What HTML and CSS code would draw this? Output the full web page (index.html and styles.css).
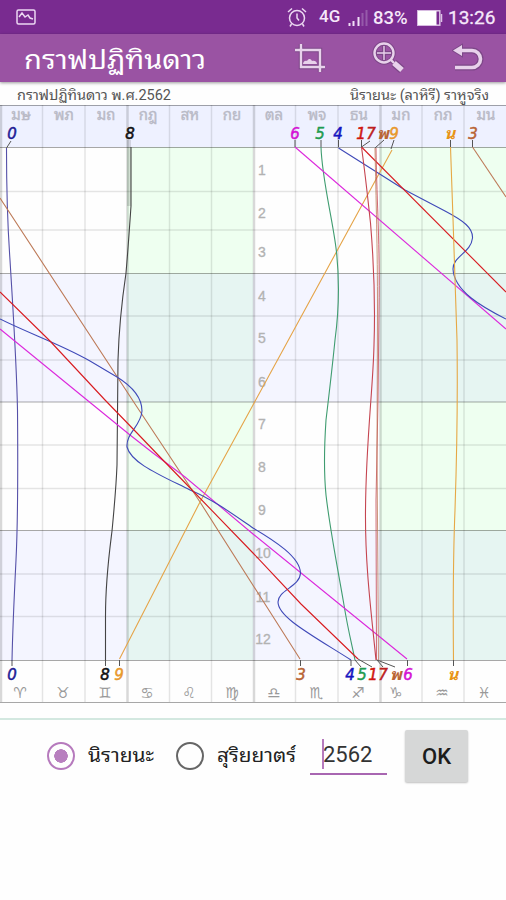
FILE: index.html
```
<!DOCTYPE html>
<html lang="th">
<head>
    <meta charset="UTF-8">
    <meta name="viewport" content="width=device-width, initial-scale=1.0">
    <title>กราฟปฏิทินดาว</title>
    <link rel="stylesheet" href="styles.css">
</head>
<body>
    <div class="status-bar">
        <svg class="picture-icon" width="20" height="16" viewBox="0 0 20 16">
            <rect x="1" y="1" width="18" height="14" rx="1.5"/>
            <path d="M3 8l3-4 3 4 3-2 2 3 3 1"/>
        </svg>
        <div class="status-right">
            <svg class="alarm-icon" width="20" height="21" viewBox="0 0 20 21">
                <circle cx="10" cy="11" r="7.5"/>
                <path d="M10 6.500V11l2 2.500M1 5l4-3.500M19 5l-4-3.500M4.500 17L3 19.500M15.500 17l1.500 2.500"/>
            </svg>
            <span class="network">4G</span>
            <svg class="signal-icon" width="20" height="18" viewBox="0 0 20 18">
                <path d="M1.500 14v3M5.500 12v5M10.500 8v9"/>
                <path class="dim" d="M14.500 4v13M18.500 1v16"/>
            </svg>
            <span class="percent">83%</span>
            <svg class="battery-icon" width="26" height="16" viewBox="0 0 26 16">
                <rect class="frame" x=".8" y=".8" width="22" height="14.400"/>
                <rect class="level" x="1" y="1" width="18.500" height="14"/>
                <path class="frame" d="M24.500 4v8"/>
            </svg>
            <span class="clock">13:26</span>
        </div>
    </div>
    <div class="toolbar">
        <h1><svg width="184" height="48"><text x="0" y="29" textLength="182" lengthAdjust="spacingAndGlyphs">กราฟปฏิทินดาว</text></svg></h1>
        <div class="actions">
            <svg width="32" height="32" viewBox="0 0 32 32">
                <g class="icon-edge"><path d="M1 8h25v22M7 2v23h24"/></g>
                <g class="icon-line"><path d="M1 8h25v22M7 2v23h24"/></g>
                <path class="icon-fill" d="M9 22c0-3 3-4 4-3 2-3 4-2 5 0 3-1 5 1 5 3z"/>
            </svg>
            <svg width="34" height="33" viewBox="0 0 34 33">
                <g class="icon-edge"><circle cx="12" cy="12" r="9.500"/><path d="M19 19l3 3"/><path class="handle" d="M22 22l8 7"/></g>
                <g class="icon-line"><circle cx="12" cy="12" r="9.500"/><path d="M19 19l3 3"/><path class="handle" d="M22 22l8 7"/></g>
                <path class="cross-edge" d="M12 5v14M5 12h14"/>
                <path class="cross" d="M12 5v14M5 12h14"/>
            </svg>
            <svg width="32" height="30" viewBox="0 0 32 30">
                <g class="icon-edge back"><path d="M8 7.500h12a8.500 8.500 0 0 1 0 17H3"/><path class="head" d="M1 7.500L10 2v11z"/></g>
                <g class="icon-line back"><path d="M8 7.500h12a8.500 8.500 0 0 1 0 17H3"/></g>
                <path class="icon-fill" d="M1 7.500L10 2v11z"/>
            </svg>
        </div>
    </div>

    <svg class="chart" width="506" height="622" viewBox="0 82 506 622">
        <!-- captions -->
        <g class="caption">
            <text x="17" y="100" textLength="154" lengthAdjust="spacingAndGlyphs">กราฟปฏิทินดาว พ.ศ.2562</text>
            <text x="350" y="100" textLength="139" lengthAdjust="spacingAndGlyphs">นิรายนะ (ลาหิรี) ราหูจริง</text>
        </g>

        <!-- backgrounds -->
        <rect class="bg-head" x="0" y="105" width="506" height="42"/>
        <rect class="bg-blue" x="0" y="274" width="506" height="128"/>
        <rect class="bg-blue" x="0" y="531" width="506" height="129"/>
        <g class="bg-green">
            <rect x="127" y="147" width="126" height="127"/>
            <rect x="380" y="147" width="126" height="127"/>
            <rect x="127" y="402" width="126" height="129"/>
            <rect x="380" y="402" width="126" height="129"/>
        </g>
        <g class="bg-teal">
            <rect x="127" y="274" width="126" height="128"/>
            <rect x="380" y="274" width="126" height="128"/>
            <rect x="127" y="531" width="126" height="129"/>
            <rect x="380" y="531" width="126" height="129"/>
        </g>

        <!-- grid -->
        <path class="grid" d="M42.500 105v597M85 105v597M169.500 105v597M211.500 105v597M295.500 105v597M338 105v597M422 105v597M464 105v597"/>
        <path class="grid" d="M0 191.500h506M0 230h506M0 316h506M0 360h506M0 445h506M0 488.500h506M0 574h506M0 616.500h506"/>
        <path class="grid-wide" d="M1 105v597M127.500 105v597M254 105v597M380.500 105v597"/>
        <path class="grid-quarter" d="M0 105.500h506M0 147.500h506M0 273.500h506M0 402h506M0 530.500h506M0 660.500h506M0 702.500h506"/>
        <rect class="shade" x="127" y="140" width="4" height="66"/>

        <g class="month">
            <text x="21" y="120">มษ</text>
            <text x="64" y="120">พภ</text>
            <text x="106" y="120">มถ</text>
            <text x="148" y="120">กฎ</text>
            <text x="190" y="120">สห</text>
            <text x="232" y="120">กย</text>
            <text x="274" y="120">ตล</text>
            <text x="317" y="120">พจ</text>
            <text x="359" y="120">ธน</text>
            <text x="401" y="120">มก</text>
            <text x="443" y="120">กภ</text>
            <text x="486" y="120">มน</text>
        </g>
        <g class="row-number">
            <text x="262" y="175">1</text>
            <text x="262" y="218">2</text>
            <text x="262" y="257">3</text>
            <text x="262" y="301">4</text>
            <text x="262" y="343">5</text>
            <text x="262" y="387">6</text>
            <text x="262" y="429">7</text>
            <text x="262" y="472">8</text>
            <text x="262" y="515">9</text>
            <text x="263" y="558">10</text>
            <text x="263" y="602">11</text>
            <text x="263" y="644">12</text>
        </g>
        <g class="zodiac">
            <text x="20" y="698">♈&#xFE0E;</text>
            <text x="63" y="698">♉&#xFE0E;</text>
            <text x="105" y="698">♊&#xFE0E;</text>
            <text x="147" y="698">♋&#xFE0E;</text>
            <text x="189" y="698">♌&#xFE0E;</text>
            <text x="232" y="698">♍&#xFE0E;</text>
            <text x="274" y="698">♎&#xFE0E;</text>
            <text x="316" y="698">♏&#xFE0E;</text>
            <text x="358" y="698">♐&#xFE0E;</text>
            <text x="396" y="698">♑&#xFE0E;</text>
            <text x="442" y="698">♒&#xFE0E;</text>
            <text x="484" y="698">♓&#xFE0E;</text>
        </g>

        <!-- planets -->
        <g class="orbit">
            <path class="navy" d="M6.500 148C6.500 200 7.500 225 10 260C13 310 16.500 360 17.500 410C18 470 18 520 16 560C14 600 12.500 635 12 661"/>
            <path class="black" d="M131 147V206C129 235 128 250 126 273C122 300 119 325 118 360C117.500 390 117.500 425 117 465C116 490 114 510 112 531C109 555 105.500 580 105.500 616V661"/>
            <path class="brown" d="M0 198L137 407L200 502L300 659"/>
            <path class="brown" d="M472.500 147L506 197"/>
            <path class="orange" d="M392 150L253 405L200 502L119.500 659"/>
            <path class="green" d="M321 147C322 180 333 220 336.500 252C340 285 339 310 335 340C332 370 329 395 326 420C324 450 324 475 326 495C330 530 338 570 344 605C348 630 352 645 355 660"/>
            <path class="magenta" d="M295 147L506 329"/>
            <path class="magenta" d="M0 329L87 400L130 435L153 453L185 477L253 534L407 659"/>
            <path class="blue" d="M338.500 148L405 190L445 211C464 221 473 228 472.500 238C471 253 453 256 453 269C454 291 482 307 506 319"/>
            <path class="blue" d="M0 319C30 334 60 344 90 361L117 377C130 385 142 396 142 411C141 426 126 433 127 447C131 463 160 475 190 490C214 500 234 515 253 528C275 541 300 557 300.500 573C300 587 278 590 278 602C278 617 310 634 351 660"/>
            <path class="red" d="M361.500 147L506 292"/>
            <path class="red" d="M0 292L50 341L105 400L137 433L160 457L193 491L253 553L301 604L358 659"/>
            <path class="crimson" d="M361.500 147C366 180 368 200 370.500 223C374 265 375.500 300 374 345C373 390 366 440 365.500 510C365 565 371 610 376 660"/>
            <path class="crimson thin" d="M376 148C377 210 380 240 379 310L378 400L376 500L376.500 660"/>
            <path class="brown thin" d="M375 148C376 200 377.500 245 377.500 310L377 450L378.500 660"/>
            <path class="amber" d="M450.500 147C453 210 455 290 457 340C458 410 457 450 455 510C453 560 453 610 453.500 660"/>
        </g>
        <path class="lead" d="M11 141L6.500 148M295 140v7M321 140v7M338.500 140v7M370 141L361.500 147M361.500 140v7M384 140L375 148M394 140L391 149M450.500 140v7M472.500 140v7"/>
        <path class="lead" d="M12 660v6M105.500 660v6M119.500 660v6M300.500 660v6M351 660v6M355 660l6 7M358 659l14 8M377 660l6 7M377 660l18 7M407.500 660v6M453.500 660v6"/>

        <g class="planet">
            <text class="c-navy" x="12" y="139">0</text>
            <text class="c-black" x="130" y="139">8</text>
            <text class="c-magenta" x="295" y="139">6</text>
            <text class="c-green" x="320" y="139">5</text>
            <text class="c-blue" x="338" y="139">4</text>
            <text class="c-red" x="361" y="139">1</text>
            <text class="c-crimson" x="371" y="139">7</text>
            <text class="thai c-brown" x="383" y="139">พ</text>
            <text class="c-orange" x="394" y="139">9</text>
            <text class="thai c-amber" x="450" y="139">น</text>
            <text class="c-brown" x="473" y="139">3</text>

            <text class="c-navy" x="12" y="680">0</text>
            <text class="c-black" x="105" y="680">8</text>
            <text class="c-orange" x="119" y="680">9</text>
            <text class="c-brown" x="301" y="680">3</text>
            <text class="c-blue" x="350" y="680">4</text>
            <text class="c-green" x="362" y="680">5</text>
            <text class="c-red" x="373" y="680">1</text>
            <text class="c-crimson" x="383" y="680">7</text>
            <text class="thai c-brown" x="396" y="680">พ</text>
            <text class="c-magenta" x="408" y="680">6</text>
            <text class="thai c-amber" x="453" y="680">น</text>
        </g>
    </svg>

    <div class="form-row">
        <span class="radio checked"></span>
        <svg class="radio-label" width="68" height="40"><text x="0" y="26" textLength="66" lengthAdjust="spacingAndGlyphs">นิรายนะ</text></svg>
        <span class="radio second"></span>
        <svg class="radio-label" width="80" height="40"><text x="0" y="26" textLength="79" lengthAdjust="spacingAndGlyphs">สุริยยาตร์</text></svg>
        <div class="year"><span class="caret"></span>2562</div>
        <button class="ok">OK</button>
    </div>
</body>
</html>
```
FILE: styles.css
```
body {
    margin: 0;
    background: #fefefe;
    font-family: Roboto, "Noto Sans Thai Looped", "Loma", "Noto Sans Thai", "Noto Sans", sans-serif;
    color: #222;
}
svg {
    display: block;
    fill: none;
    flex-shrink: 0;
}
.status-bar {
    height: 34px;
    background: #792b90;
    display: flex;
    align-items: center;
    justify-content: space-between;
    padding: 0 11px 0 16px;
    color: #f6e8fa;
}
.picture-icon,
.alarm-icon {
    stroke: #ecd8f2;
    stroke-width: 1.5;
}
.status-right {
    display: flex;
    align-items: center;
    font-size: 19px;
    padding-top: 1px;
}
.network {
    font-size: 17px;
    font-weight: 500;
    margin: 0 9px 3px 12px;
    width: 20px;
}
.signal-icon {
    stroke: #f0dff5;
    stroke-width: 2;
    margin-right: 5px;
}
.signal-icon .dim {
    stroke: #965aaa;
}
.percent {
    width: 36px;
    font-weight: 500;
    font-size: 18.5px;
    margin-right: 8px;
}
.battery-icon .frame {
    stroke: #dcc2e5;
    stroke-width: 1.5;
}
.battery-icon .level {
    fill: #fff;
}
.clock {
    margin-left: 5px;
    width: 47px;
    -webkit-text-stroke: 0.3px #f6e8fa;
}
.toolbar {
    height: 48px;
    background: #9a53a3;
    display: flex;
    justify-content: space-between;
    padding: 0 22px 0 24px;
    box-shadow: 0 1px 3px rgba(0, 0, 0, 0.4);
    position: relative;
}
.toolbar h1 {
    margin: 0;
    font-size: 27px;
    font-weight: normal;
}
.toolbar h1 svg {
    fill: #fff;
    overflow: visible;
}
.toolbar h1 text {
    transform: translateY(6px);
}
.actions {
    display: flex;
    align-items: center;
    gap: 46px;
}
.actions svg {
    margin-bottom: 1px;
}
.icon-edge {
    stroke: #7d4788;
    stroke-width: 4.4;
}
.icon-line {
    stroke: #e8d2eb;
    stroke-width: 2.4;
}
.icon-edge .handle {
    stroke-width: 8;
}
.icon-line .handle {
    stroke-width: 5.5;
}
.icon-edge.back {
    stroke-width: 6;
}
.icon-edge .head {
    stroke-width: 2;
}
.icon-line.back {
    stroke-width: 3.6;
}
.icon-fill {
    fill: #e8d2eb;
}
.cross-edge {
    stroke: #7d4788;
    stroke-width: 4;
}
.cross {
    stroke: #e8d2eb;
    stroke-width: 1.4;
}

/* chart */
.caption {
    font-size: 14px;
    fill: #555;
}
.bg-head { fill: #eef1ff; }
.bg-blue { fill: #f4f5ff; }
.bg-green { fill: #eefff0; }
.bg-teal { fill: #e6f5f2; }
.grid {
    stroke: #000;
    stroke-opacity: 0.1;
    stroke-width: 1.5;
}
.grid-wide {
    stroke: #000;
    stroke-opacity: 0.15;
    stroke-width: 2.5;
}
.grid-quarter {
    stroke: #000;
    stroke-opacity: 0.34;
}
.shade {
    fill: #000;
    fill-opacity: 0.12;
}
.month,
.zodiac,
.row-number,
.planet {
    text-anchor: middle;
}
.month {
    font-size: 15px;
    fill: #b9bac6;
    stroke: #b9bac6;
    stroke-width: 0.4;
}
.row-number {
    font-family: "Liberation Sans", sans-serif;
    font-size: 14px;
    fill: #b2b2b2;
    stroke: #b2b2b2;
    stroke-width: 0.3;
}
.zodiac {
    font-family: "DejaVu Sans", sans-serif;
    font-size: 15px;
    fill: #999;
}
.orbit {
    stroke-width: 1.1;
    stroke-linejoin: round;
}
.orbit .thin {
    stroke-width: 0.8;
}
.navy { stroke: #5550a8; }
.black { stroke: #444; }
.brown { stroke: #bd7a58; }
.orange { stroke: #e5a448; }
.green { stroke: #3f9c70; }
.magenta { stroke: #dc28dc; }
.blue { stroke: #3f49b8; }
.red { stroke: #d81b20; }
.crimson { stroke: #c54550; }
.amber { stroke: #e6a845; }
.lead {
    stroke: #555;
    stroke-width: 1;
}
.planet {
    font-family: "DejaVu Sans", "Noto Sans Thai Looped", "Loma", "Noto Sans Thai", sans-serif;
    font-size: 15px;
    font-style: italic;
    stroke-width: 0.5;
}
.planet .thai {
    font-size: 16px;
    font-weight: bold;
    stroke-width: 0;
}
.c-navy { fill: #1f1c96; stroke: #1f1c96; }
.c-black { fill: #111; stroke: #111; }
.c-brown { fill: #b96434; stroke: #b96434; }
.c-orange { fill: #e8982c; stroke: #e8982c; }
.c-green { fill: #1f9c50; stroke: #1f9c50; }
.c-magenta { fill: #d412d4; stroke: #d412d4; }
.c-blue { fill: #1414c0; stroke: #1414c0; }
.c-red { fill: #d0140f; stroke: #d0140f; }
.c-crimson { fill: #bd2020; stroke: #bd2020; }
.c-amber { fill: #e89414; stroke: #e89414; }

/* form */
.form-row {
    margin-top: 14px;
    border-top: 2px solid #d3e8e0;
    height: 72px;
    display: flex;
    align-items: center;
    padding-left: 47px;
}
.radio {
    box-sizing: border-box;
    width: 28px;
    height: 28px;
    border: 2.5px solid #666;
    border-radius: 50%;
    flex-shrink: 0;
}
.radio.checked {
    border-color: #b67abd;
    background: radial-gradient(circle, #b880bf 6.5px, transparent 7px);
}
.radio.second {
    margin-left: 20px;
}
.radio-label {
    margin-left: 13px;
    font-size: 20px;
    fill: #222;
    overflow: visible;
}
.radio-label + .radio.second + .radio-label {
    margin-left: 13px;
}
.year {
    box-sizing: border-box;
    margin-left: 13px;
    width: 77px;
    height: 37px;
    padding-left: 13px;
    border-bottom: 2px solid #a866b1;
    font-size: 22px;
    line-height: 34px;
    color: #333;
    position: relative;
}
.caret {
    position: absolute;
    left: 12px;
    top: 1px;
    width: 2px;
    height: 30px;
    background: #b67abd;
}
.ok {
    margin-left: 18px;
    width: 63px;
    height: 52px;
    border: 0;
    border-radius: 2px;
    background: #d6d7d7;
    box-shadow: 0 1px 2px rgba(0, 0, 0, 0.25);
    font-family: Roboto, sans-serif;
    font-size: 22px;
    font-weight: 500;
    color: #1c1c1c;
    padding: 0;
}
```
